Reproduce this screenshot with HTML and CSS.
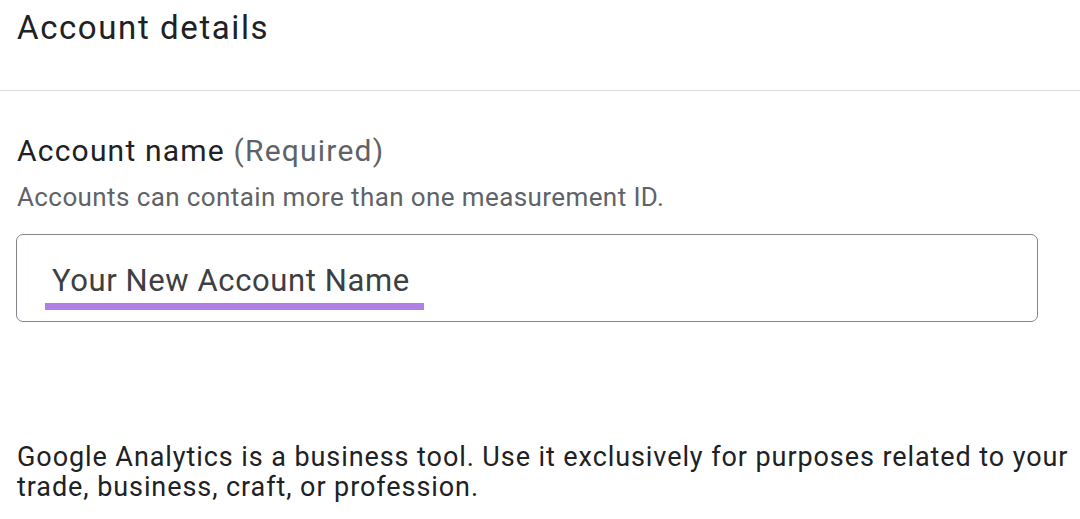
FILE: index.html
```html
<!DOCTYPE html>
<html lang="en">
<head>
<meta charset="utf-8">
<title>Account details</title>
<link rel="stylesheet" href="styles.css">
</head>
<body>
<header class="section-head">
  <h1 class="title">Account details</h1>
</header>
<main class="content">
  <div class="field">
    <label class="label" for="acct">Account name <span class="req">(Required)</span></label>
    <p class="help">Accounts can contain more than one measurement ID.</p>
    <div class="input-box">
      <span class="input-value" id="acct">Your New Account Name</span>
      <span class="highlight"></span>
    </div>
  </div>
  <p class="notice">Google Analytics is a business tool. Use it exclusively for purposes related to your trade, business, craft, or profession.</p>
</main>
</body>
</html>
```
FILE: styles.css
```css
html, body {
  margin: 0;
  padding: 0;
  background: #ffffff;
}
body {
  font-family: Roboto, "Liberation Sans", Arial, sans-serif;
  color: #202124;
  width: 1080px;
  height: 519px;
  overflow: hidden;
}
.section-head {
  padding: 9px 17px 43px;
  border-bottom: 1px solid #dadce0;
}
.title {
  margin: 0;
  font-weight: 400;
  font-size: 33px;
  line-height: 38px;
  letter-spacing: 1.6px;
  color: #202124;
}
.content {
  padding: 0 8px 0 17px;
}
.field {
  padding-top: 43px;
}
.label {
  display: block;
  font-size: 30px;
  line-height: 34px;
  letter-spacing: 1.2px;
  color: #202124;
}
.req {
  color: #5f6368;
}
.help {
  margin: 14px 0 0;
  font-size: 26px;
  line-height: 30px;
  letter-spacing: 0.4px;
  color: #5f6368;
}
.input-box {
  position: relative;
  box-sizing: border-box;
  margin: 22px 0 0 -1px;
  width: 1022px;
  height: 88px;
  border: 1.5px solid #80868b;
  border-radius: 7px;
  display: flex;
  align-items: flex-start;
  padding: 28px 0 0 35px;
}
.input-value {
  font-size: 31px;
  line-height: 36px;
  letter-spacing: 0.6px;
  color: #3c4043;
}
.highlight {
  position: absolute;
  left: 28px;
  top: 68px;
  width: 379px;
  height: 7px;
  background: #b07fe6;
}
.notice {
  margin: 120px 0 0;
  font-size: 27px;
  line-height: 30px;
  letter-spacing: 0.92px;
  color: #202124;
}
```
